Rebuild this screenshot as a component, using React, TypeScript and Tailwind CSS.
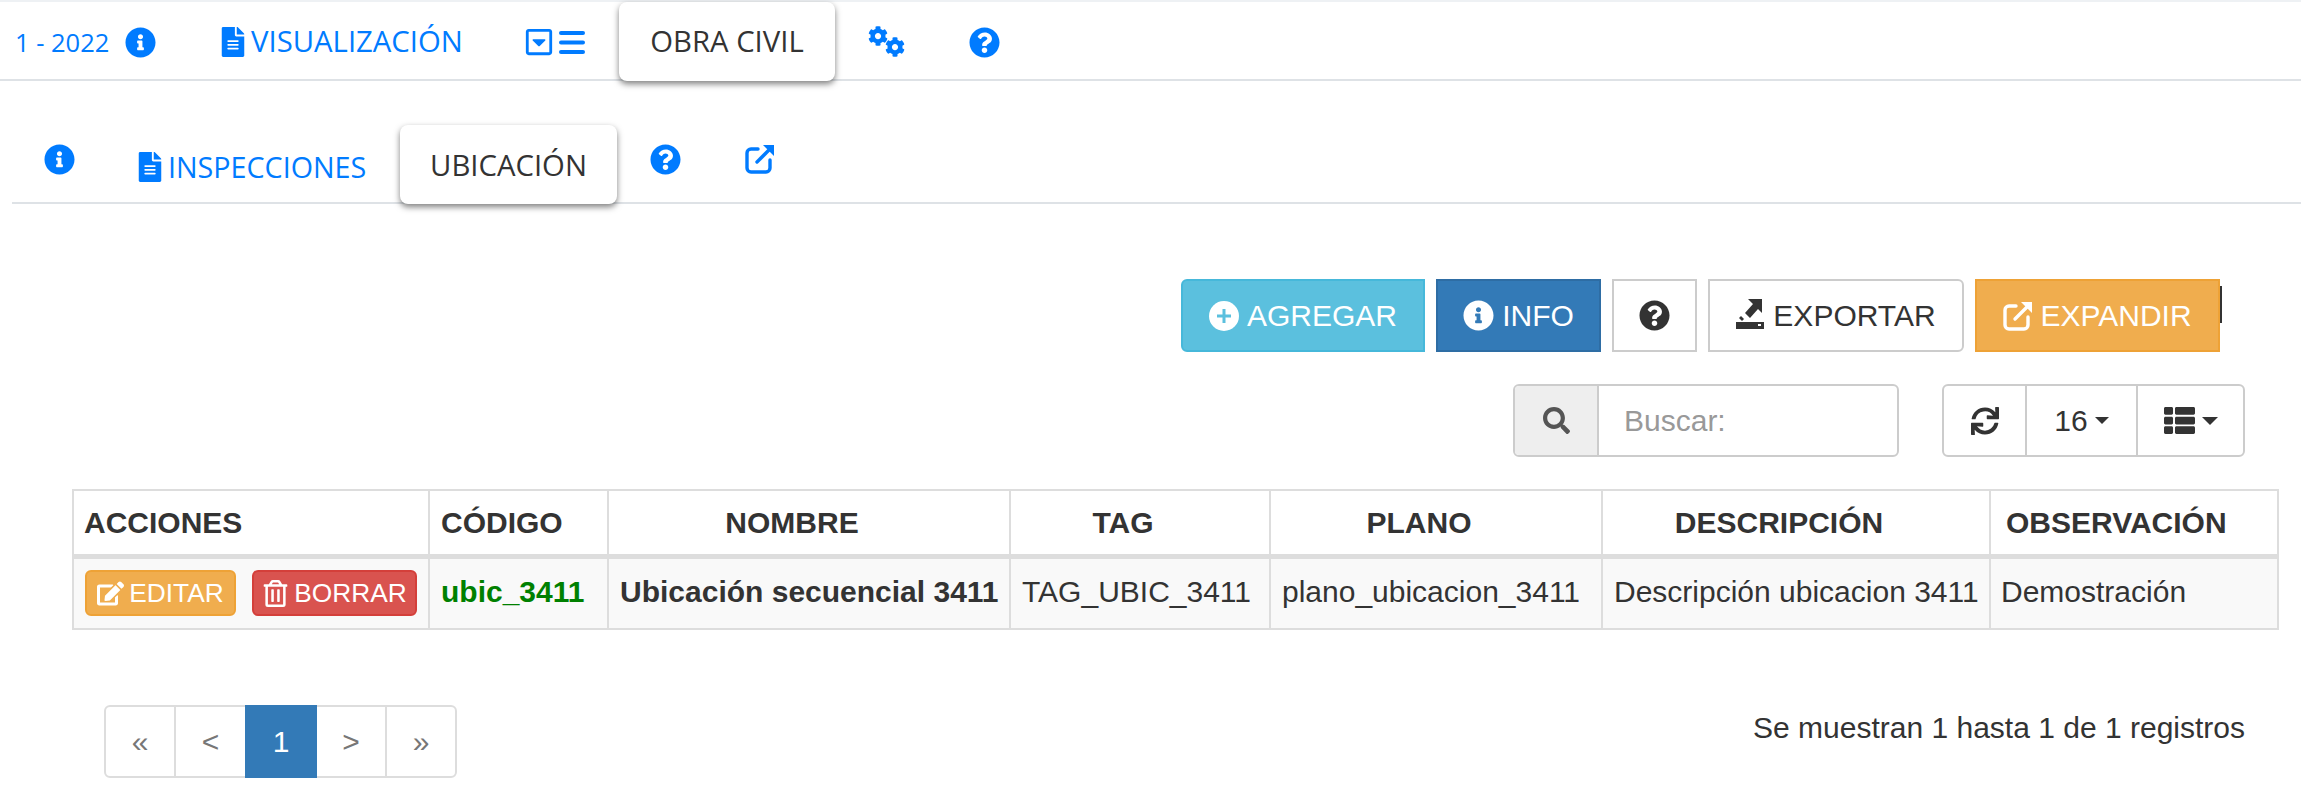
import React from "react";
import { FaInfoCircle, FaFileAlt, FaRegCaretSquareDown, FaCog, FaQuestionCircle, FaSearch, FaThList, FaEdit, FaRegTrashAlt, FaSync } from "react-icons/fa";

const PlusSign = ({ className }: { className?: string }) => (
  <svg viewBox="0 0 30 30" className={className}>
    <circle cx="15" cy="15" r="15" fill="#fff" />
    <path d="M15 8v14M8 15h14" stroke="#5bc0de" strokeWidth="3" fill="none" />
  </svg>
);

const NewWindow = ({ className }: { className?: string }) => (
  <svg viewBox="0 0 30 30" className={className} fill="none" stroke="currentColor" strokeWidth="3.4" strokeLinecap="round">
    <path d="M13 5H6a4 4 0 0 0-4 4v15a4 4 0 0 0 4 4h15a4 4 0 0 0 4-4v-8" />
    <path d="M12 18 25 5" />
    <path d="M18 1h11v11z" fill="currentColor" stroke="none" />
  </svg>
);

const ExportIcon = ({ className }: { className?: string }) => (
  <svg viewBox="0 0 28 30" className={className} fill="currentColor">
    <path d="M12 0h14v14l-4-4-8 9-5-5 8-9z" />
    <path d="M5 17l3 3-2 2-3-3z" />
    <path d="M0 23h28v7H0zM22 25v2h3v-2z" fillRule="evenodd" />
  </svg>
);

const Bars = ({ className }: { className?: string }) => (
  <svg viewBox="0 0 26 23" className={className} fill="currentColor">
    <rect x="0" y="0" width="26" height="4" rx="2" />
    <rect x="0" y="9.5" width="26" height="4" rx="2" />
    <rect x="0" y="19" width="26" height="4" rx="2" />
  </svg>
);

function Tab({ className, children }: { className: string; children: React.ReactNode }) {
  return (
    <div className={`${className} flex items-center justify-center bg-white rounded-[8px] shadow-[0_3px_6px_rgba(0,0,0,0.5)] text-[#333] text-[29.3px] relative z-10`}>
      {children}
    </div>
  );
}

const headers = [
  ["ACCIONES", "w-[356px] text-left px-[10px]"],
  ["CÓDIGO", "w-[179px] text-left pl-[11px] pr-[10px]"],
  ["NOMBRE", "w-[402px] text-center pl-[11px] pr-[45px]"],
  ["TAG", "w-[260px] text-center pl-[11px] pr-[45px]"],
  ["PLANO", "w-[332px] text-center pl-[11px] pr-[45px]"],
  ["DESCRIPCIÓN", "w-[388px] text-center pl-[11px] pr-[45px]"],
  ["OBSERVACIÓN", "w-[288px] text-left pl-[15px] pr-0"],
];

export default function App() {
  const tabFont = { fontFamily: '"Open Sans", sans-serif' };
  return (
    <div className="w-[2301px] h-[800px] bg-white overflow-hidden font-['Liberation_Sans',sans-serif] text-[#333]">
      <div className="h-[2px] bg-[#eef1f4]" />
      <div style={tabFont} className="h-[79px] border-b-2 border-[#dee2e6] flex items-start text-[#007bff] text-[29.3px]">
        <div className="flex items-center h-[77px] pt-[3px] pl-[15px] w-[204px]">
          <span className="text-[25.5px]">1 - 2022</span>
          <FaInfoCircle className="ml-[16px] text-[31px]" />
        </div>
        <div className="flex items-center h-[77px] pt-[3px] w-[322px] pl-[14px]">
          <FaFileAlt className="text-[30px] mr-[3px]" />
          <span>VISUALIZACIÓN</span>
        </div>
        <div className="flex items-center h-[77px] pt-[3px] w-[93px] gap-[5px]">
          <FaRegCaretSquareDown className="text-[30px] -ml-[2px]" />
          <Bars className="w-[26px] h-[23px]" />
        </div>
        <Tab className="h-[79px] w-[216px] pt-[1px]">OBRA CIVIL</Tab>
        <div className="flex items-center h-[77px] w-[134px] pl-[33px]">
          <div className="flex items-start w-[37px] h-[30px]">
            <FaCog className="text-[20px] shrink-0" />
            <FaCog className="text-[20px] shrink-0 ml-[-3px] mt-[11px]" />
          </div>
        </div>
        <div className="flex items-center h-[77px] pt-[3px]"><FaQuestionCircle className="text-[31px]" /></div>
      </div>
      <div style={tabFont} className="ml-[12px] mt-[44px] h-[79px] border-b-2 border-[#dee2e6] flex items-start text-[#007bff] text-[29.3px]">
        <div className="flex items-center h-[68px] w-[118px] pl-[32px]"><FaInfoCircle className="text-[31px]" /></div>
        <div className="flex items-center h-[77px] w-[270px] pl-[5px] pt-[7px]">
          <FaFileAlt className="text-[30px] mr-[3px]" />
          <span className="text-[28.7px]">INSPECCIONES</span>
        </div>
        <Tab className="h-[79px] w-[217px] pt-[3px]">UBICACIÓN</Tab>
        <div className="flex items-center h-[68px] w-[128px] pl-[33px]"><FaQuestionCircle className="text-[31px]" /></div>
        <div className="flex items-center h-[68px]"><NewWindow className="w-[30px] h-[30px]" /></div>
      </div>

      <div className="mt-[75px] flex justify-end pr-[81px] gap-[11px] text-[30px] leading-none relative">
        <div className="h-[73px] w-[244px] rounded-l-[6px] bg-[#5bc0de] border-2 border-[#46b8da] text-white flex items-center justify-center gap-[8px]">
          <PlusSign className="w-[30px] h-[30px]" />AGREGAR
        </div>
        <div className="h-[73px] w-[165px] bg-[#337ab7] border-2 border-[#2e6da4] text-white flex items-center justify-center gap-[8px]">
          <FaInfoCircle className="text-[31px]" />INFO
        </div>
        <div className="h-[73px] w-[85px] bg-white border-2 border-[#ccc] flex items-center justify-center">
          <FaQuestionCircle className="text-[31px]" />
        </div>
        <div className="h-[73px] w-[256px] bg-white border-2 border-[#ccc] rounded-r-[6px] flex items-center justify-center gap-[9px]">
          <ExportIcon className="w-[28px] h-[30px] mt-[-4px]" />EXPORTAR
        </div>
        <div className="h-[73px] w-[245px] bg-[#f0ad4e] border-2 border-[#eea236] text-white flex items-center justify-center gap-[7px]">
          <NewWindow className="w-[30px] h-[30px]" />EXPANDIR
        </div>
        <div className="absolute right-[79px] top-[7px] w-[2px] h-[37px] bg-[#333]" />
      </div>

      <div className="mt-[32px] flex justify-end pr-[56px] gap-[43px] text-[30px] leading-none">
        <div className="h-[73px] w-[386px] rounded-[6px] border-2 border-[#ccc] flex overflow-hidden">
          <div className="w-[84px] bg-[#eee] border-r-2 border-[#ccc] flex items-center justify-center text-[#555]"><FaSearch className="text-[27px]" /></div>
          <div className="flex-1 flex items-center pl-[25px] text-[#999]">Buscar:</div>
        </div>
        <div className="h-[73px] w-[303px] rounded-[6px] border-2 border-[#ccc] flex">
          <div className="w-[83px] border-r-2 border-[#ccc] flex items-center justify-center"><FaSync className="text-[28px]" /></div>
          <div className="w-[111px] border-r-2 border-[#ccc] flex items-center justify-center gap-[7px]">16<span className="border-x-[7px] border-x-transparent border-t-[7px] border-t-[#333]" /></div>
          <div className="flex-1 flex items-center justify-center gap-[7px]"><FaThList className="text-[31px]" /><span className="border-x-[8px] border-x-transparent border-t-[8px] border-t-[#333]" /></div>
        </div>
      </div>

      <table className="ml-[72px] mt-[32px] border-collapse table-fixed w-[2206px] text-[30px]">
        <thead>
          <tr className="h-[66px]">
            {headers.map(([h, c]) => (
              <th key={h} className={`border-2 border-[#ddd] border-b-[5px] font-bold ${c}`}>{h}</th>
            ))}
          </tr>
        </thead>
        <tbody>
          <tr className="h-[73px] bg-[#f9f9f9]">
            <td className="border-2 border-[#ddd] pl-[11px]">
              <div className="flex gap-[16px]">
                <div className="w-[151px] h-[46px] rounded-[6px] bg-[#f0ad4e] border-2 border-[#eea236] text-white text-[26.3px] flex items-center justify-center gap-[5px]"><FaEdit className="text-[27px]" />EDITAR</div>
                <div className="w-[165px] h-[46px] rounded-[6px] bg-[#d9534f] border-2 border-[#d43f3a] text-white text-[26.3px] flex items-center justify-center gap-[5px]"><FaRegTrashAlt className="text-[27px]" />BORRAR</div>
              </div>
            </td>
            <td className="border-2 border-[#ddd] pl-[11px] pr-[9px] pb-[3px] font-bold text-[#008000]">ubic_3411</td>
            <td className="border-2 border-[#ddd] pl-[11px] pr-[9px] pb-[3px] font-bold whitespace-nowrap">Ubicación secuencial 3411</td>
            <td className="border-2 border-[#ddd] pl-[11px] pr-[9px] pb-[3px] whitespace-nowrap">TAG_UBIC_3411</td>
            <td className="border-2 border-[#ddd] pl-[11px] pr-[9px] pb-[3px] whitespace-nowrap">plano_ubicacion_3411</td>
            <td className="border-2 border-[#ddd] pl-[11px] pr-[9px] pb-[3px] whitespace-nowrap">Descripción ubicacion 3411</td>
            <td className="border-2 border-[#ddd] px-[10px] pb-[3px] whitespace-nowrap">Demostración</td>
          </tr>
        </tbody>
      </table>

      <div className="mt-[75px] flex justify-between pl-[104px] pr-[56px]">
        <div className="h-[73px] w-[353px] flex rounded-[6px] border-2 border-[#ddd] text-[#777] text-[30px]">
          <div className="w-[70px] flex items-center justify-center border-r-2 border-[#ddd]">«</div>
          <div className="w-[69px] flex items-center justify-center">&lt;</div>
          <div className="w-[72px] -my-[2px] flex items-center justify-center bg-[#337ab7] text-white">1</div>
          <div className="w-[70px] flex items-center justify-center border-r-2 border-[#ddd]">&gt;</div>
          <div className="flex-1 flex items-center justify-center">»</div>
        </div>
        <div className="text-[30px]">Se muestran 1 hasta 1 de 1 registros</div>
      </div>
    </div>
  );
}
